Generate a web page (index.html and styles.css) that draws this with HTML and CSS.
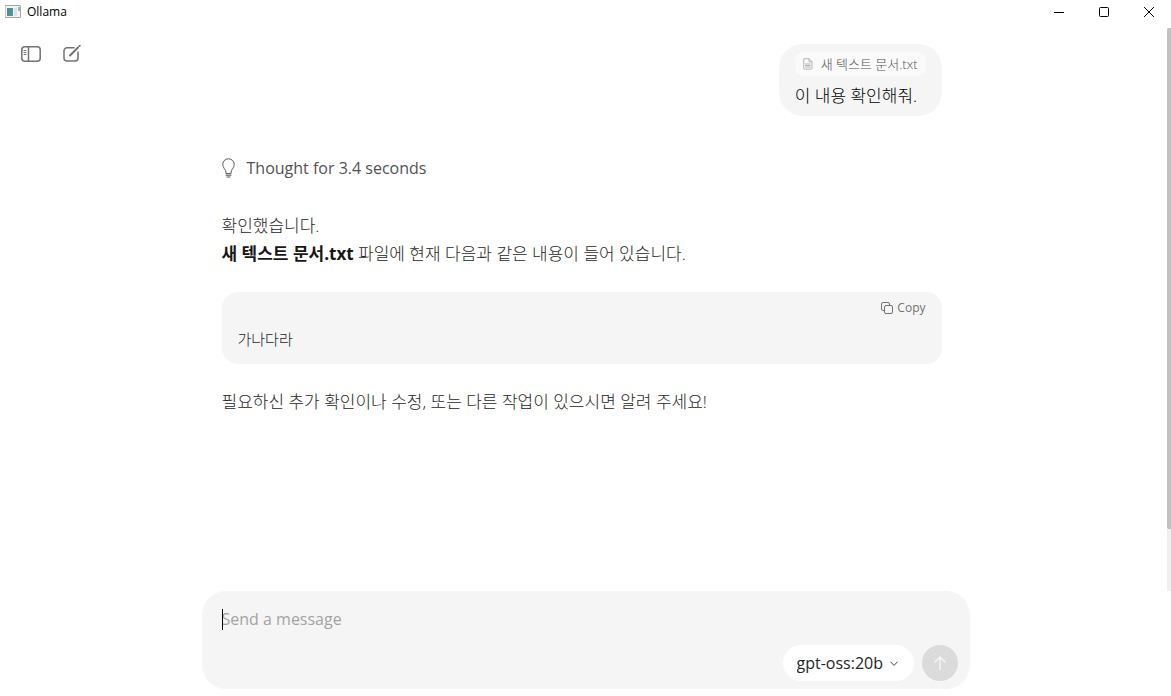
FILE: index.html
```html
<!DOCTYPE html>
<html lang="ko">
<head>
    <meta charset="UTF-8">
    <meta name="viewport" content="width=device-width, initial-scale=1">
    <title>Ollama</title>
    <link rel="stylesheet" href="styles.css">
</head>
<body>

<header class="titlebar">
    <svg class="app-icon" width="16" height="14" viewBox="0 0 16 14">
        <defs>
            <linearGradient id="screen" x1="0" y1="0" x2="1" y2="1">
                <stop offset="0" stop-color="#4a7fb0"/>
                <stop offset="1" stop-color="#4fa382"/>
            </linearGradient>
        </defs>
        <rect x="0.5" y="0.5" width="15" height="12" fill="#f3f3f3" stroke="#a3a8ad"/>
        <rect x="2" y="3" width="6" height="8" fill="url(#screen)"/>
        <rect x="9" y="3" width="3" height="8" fill="#dfe1e4"/>
        <rect x="13" y="2" width="2" height="4" fill="#8dbbc4"/>
    </svg>
    <span class="app-name">Ollama</span>
    <div class="window-controls">
        <button type="button" class="window-button" aria-label="Minimize">
            <svg width="12" height="12" viewBox="0 0 12 12"><path d="M1 6.5h10"/></svg>
        </button>
        <button type="button" class="window-button" aria-label="Maximize">
            <svg width="12" height="12" viewBox="0 0 12 12"><rect x="1.5" y="1.5" width="9" height="9" rx="1"/></svg>
        </button>
        <button type="button" class="window-button" aria-label="Close">
            <svg width="12" height="12" viewBox="0 0 12 12"><path d="M1 1l10 10M11 1L1 11"/></svg>
        </button>
    </div>
</header>

<nav class="toolbar">
    <button type="button" class="tool-button" aria-label="Toggle sidebar">
        <svg width="20" height="16" viewBox="0 0 20 16">
            <rect x="0.8" y="0.8" width="18.4" height="14.4" rx="3"/>
            <path d="M7.5 1v14"/>
            <path class="thin" d="M3 4.5h2M3 6.5h2M3 8.5h2"/>
        </svg>
    </button>
    <button type="button" class="tool-button" aria-label="New chat">
        <svg width="18" height="18" viewBox="0 0 18 18">
            <path d="M11 2.8H4a3 3 0 0 0-3 3V13a3 3 0 0 0 3 3h8a3 3 0 0 0 3-3V7"/>
            <path class="pencil" d="M7 10.5L15 2.500M16.500 1l.2-.2"/>
        </svg>
    </button>
</nav>

<main class="chat">
    <div class="messages">
        <div class="user-message">
            <div class="attachment">
                <svg width="10" height="12" viewBox="0 0 10 12">
                    <path d="M1.7.7H6l3 3v6.400a1 1 0 0 1-1 1H1.700a1 1 0 0 1-1-1V1.700a1 1 0 0 1 1-1z"/>
                    <path d="M6 .8v3h3M2.500 6h4.700M2.500 7.500h4.700M2.500 9h4.700"/>
                </svg>
                <span>새 텍스트 문서.txt</span>
            </div>
            <p class="user-text">이 내용 확인해줘.</p>
        </div>

        <button type="button" class="thought">
            <svg width="13" height="20" viewBox="0 0 13 20">
                <path d="M4 15.300c0-2.300-.8-3.400-1.700-4.700C1.400 9.300.8 8 .8 6.300a5.700 5.500 0 0 1 11.400 0c0 1.700-.6 3-1.500 4.300C9.800 11.900 9 13 9 15.300z"/>
                <path d="M4 17.200h5M5 19h3"/>
            </svg>
            <span>Thought for 3.4 seconds</span>
        </button>

        <article class="answer">
            <p>확인했습니다.<br><strong>새 텍스트 문서.txt</strong> 파일에 현재 다음과 같은 내용이 들어 있습니다.</p>
            <div class="code-block">
                <button type="button" class="copy-button">
                    <svg width="12" height="12" viewBox="0 0 12 12">
                        <rect x="3.5" y="3.5" width="8" height="8" rx="1.5"/>
                        <path d="M3.500 8.500H2A1.500 1.500 0 0 1 .5 7V2A1.500 1.500 0 0 1 2 .5h5A1.500 1.500 0 0 1 8.500 2v1.500"/>
                    </svg>
                    <span>Copy</span>
                </button>
                <pre><code>가나다라</code></pre>
            </div>
            <p>필요하신 추가 확인이나 수정, 또는 다른 작업이 있으시면 알려 주세요!</p>
        </article>
    </div>
    <div class="scrollbar"><div class="scrollbar-thumb"></div></div>
</main>

<form class="composer">
    <div class="message-field">
        <textarea class="message-input" rows="1" aria-label="Message" placeholder="Send a message"></textarea>
        <span class="caret"></span>
    </div>
    <div class="composer-actions">
        <div class="model-picker">
            <select class="model-select" aria-label="Model">
                <option>gpt-oss:20b</option>
            </select>
            <svg class="chevron" width="8" height="6" viewBox="0 0 8 6"><path d="M.7 1L4 4.400 7.300 1"/></svg>
        </div>
        <button type="submit" class="send-button" aria-label="Send">
            <svg width="12" height="14" viewBox="0 0 12 14"><path d="M6 13.500V1M1 6l5-5 5 5"/></svg>
        </button>
    </div>
</form>

</body>
</html>
```
FILE: styles.css
```css
* { box-sizing: border-box; }
body {
    display: flex;
    flex-direction: column;
    height: 100vh;
    margin: 0;
    background: #fff;
    color: #404040;
    font-family: "Open Sans", "Noto Sans CJK KR", sans-serif;
    font-size: 16px;
    line-height: 28px;
}
p { margin: 0; }
button { padding: 0; border: 0; background: none; font: inherit; color: inherit; }
svg { display: block; flex: none; fill: none; stroke: currentColor; stroke-linecap: round; stroke-linejoin: round; }

/* Title bar */
.titlebar { display: flex; flex: none; align-items: center; height: 24px; padding-left: 5px; color: #000; }
.app-icon { stroke: none; }
.app-name { margin-left: 6px; font-size: 12px; line-height: 16px; }
.window-controls { display: flex; margin-left: auto; }
.window-button { display: flex; justify-content: center; align-items: center; width: 45px; height: 24px; }
.window-button svg { stroke-linecap: butt; }

/* Sidebar buttons lie over the chat area */
.toolbar { position: absolute; top: 44px; left: 20px; display: flex; gap: 20px; color: #737373; }
.tool-button { display: flex; justify-content: center; align-items: center; width: 21px; height: 20px; }
.tool-button svg { stroke-width: 1.5; }
.tool-button .thin { stroke-width: 1; }
.tool-button .pencil { stroke-width: 2; }

/* Chat */
.chat { display: flex; flex: 1; min-height: 0; margin-top: 4px; }
.messages {
    display: flex;
    flex: 1;
    flex-direction: column;
    max-width: 720px;
    margin: 0 auto;
    padding-top: 16px;
}
.user-message { align-self: flex-end; padding: 8px 16px 4px; border-radius: 24px; background: #f5f5f5; color: #000; font-weight: 300; }
.attachment {
    display: flex;
    align-items: center;
    gap: 8px;
    height: 24px;
    padding: 0 8px;
    border-radius: 8px;
    background: #fafafa;
    color: #525252;
    font-size: 13px;
}
.attachment svg { color: #b5b5b5; }
.user-text { padding: 6px 0 2px; font-size: 17px; }
.thought { display: flex; align-self: flex-start; align-items: center; gap: 12px; margin-top: 38px; color: #525252; }
.answer { margin-top: 30px; color: #262626; font-size: 17px; font-weight: 300; }
.answer strong { color: #171717; font-weight: 700; }
.code-block {
    display: flex;
    flex-direction: column;
    margin: 24px 0;
    padding: 8px 16px;
    border-radius: 16px;
    background: #f5f5f5;
}
.copy-button { display: flex; align-self: flex-end; align-items: center; gap: 4px; color: #737373; font-size: 12px; font-weight: 400; line-height: 16px; }
pre { margin: 12px 0 0; font-family: "Liberation Mono", "Noto Sans CJK KR", monospace; font-size: 15px; }
code { font: inherit; }

.scrollbar {
    width: 8px;
    padding-left: 4px;
    background: linear-gradient(#f0f0f0, #f0f0f0) right / 4px 100% no-repeat;
}
.scrollbar-thumb { height: 89%; border-radius: 2px 0 0 2px; background: #c1c1c1; }

/* Composer */
.composer {
    display: flex;
    flex: none;
    flex-direction: column;
    width: 100%;
    max-width: 768px;
    margin: 0 auto 7px;
    padding: 16px 12px 8px 20px;
    border-radius: 24px;
    background: #f5f5f5;
}
.message-field { position: relative; display: flex; }
.message-input {
    flex: 1;
    height: 24px;
    padding: 0;
    border: 0;
    outline: 0;
    background: none;
    color: #000;
    font: inherit;
    line-height: 24px;
    resize: none;
}
.message-input::placeholder { color: #a3a3a3; }
.caret { position: absolute; top: 2px; left: 0; width: 1px; height: 21px; background: #000; }
.composer-actions { display: flex; justify-content: flex-end; gap: 8px; margin-top: 14px; }
.model-picker { position: relative; }
.model-select {
    width: 131px;
    height: 36px;
    padding: 0 24px 0 14px;
    border: 0;
    border-radius: 18px;
    appearance: none;
    background: #fff;
    color: #262626;
    font: inherit;
}
.chevron { position: absolute; top: 16px; right: 16px; pointer-events: none; }
.send-button {
    display: flex;
    justify-content: center;
    align-items: center;
    width: 36px;
    height: 36px;
    border-radius: 50%;
    background: #dbdbdb;
    color: #f5f5f5;
}
.send-button svg { stroke-width: 1.5; }
```
